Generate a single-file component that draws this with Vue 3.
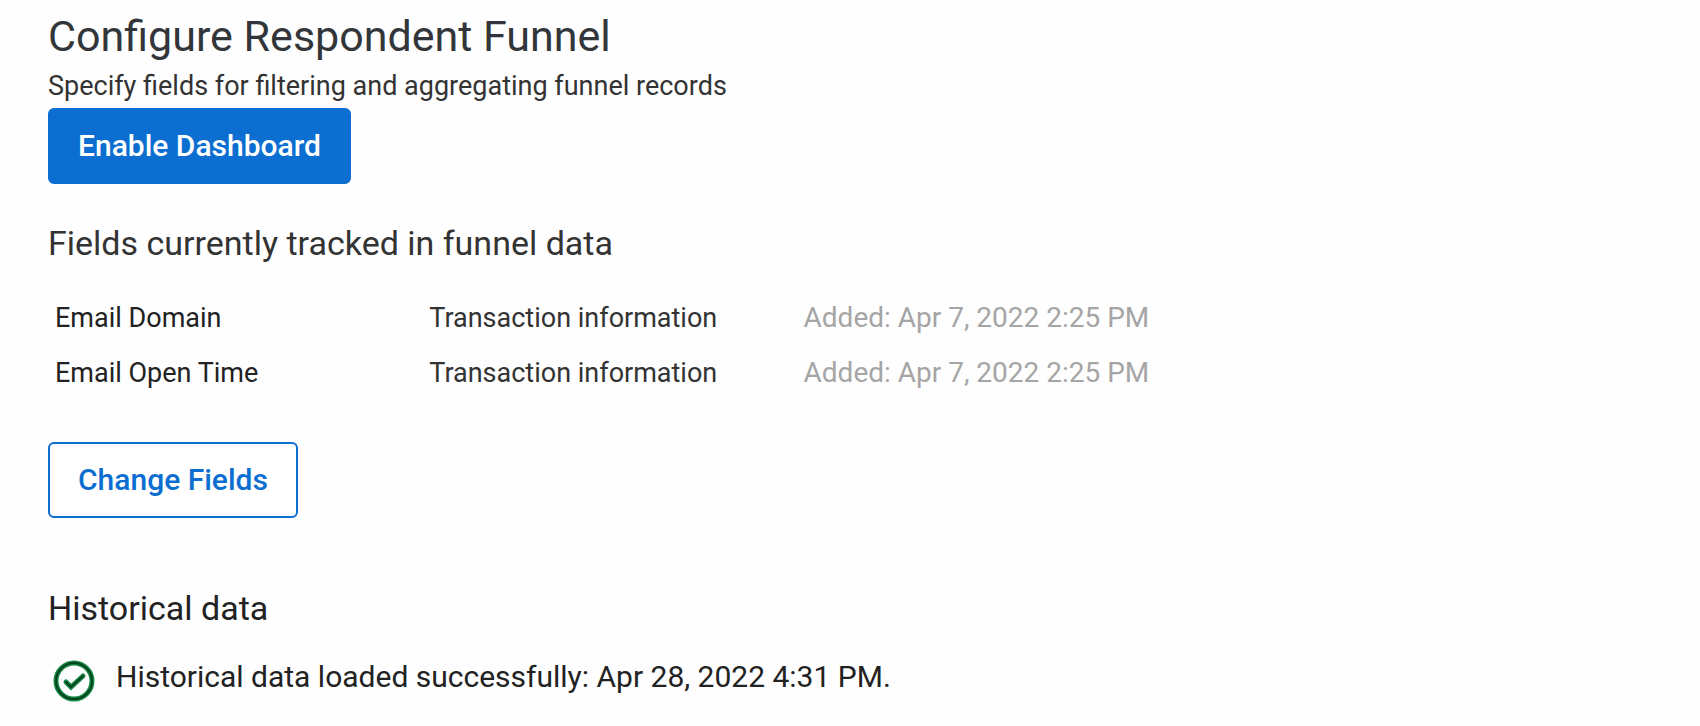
<script setup>
const fields = [
  { name: 'Email Domain', source: 'Transaction information', added: 'Added: Apr 7, 2022 2:25 PM' },
  { name: 'Email Open Time', source: 'Transaction information', added: 'Added: Apr 7, 2022 2:25 PM' },
]
</script>

<template>
  <main class="page">
    <header class="intro">
      <h1>Configure Respondent Funnel</h1>
      <p>Specify fields for filtering and aggregating funnel records</p>
      <button type="button" class="btn primary">Enable Dashboard</button>
    </header>

    <section class="tracked">
      <h2>Fields currently tracked in funnel data</h2>
      <table>
        <tbody>
          <tr v-for="field in fields" :key="field.name">
            <td class="name">{{ field.name }}</td>
            <td>{{ field.source }}</td>
            <td class="added">{{ field.added }}</td>
          </tr>
        </tbody>
      </table>
      <button type="button" class="btn outline">Change Fields</button>
    </section>

    <section class="history">
      <h2>Historical data</h2>
      <div class="status">
        <svg viewBox="0 0 42 42" fill="none" aria-hidden="true">
          <circle cx="21" cy="21" r="18" stroke="#148746" stroke-width="5" />
          <circle cx="21" cy="21" r="18" stroke="#03441c" stroke-width="2" />
          <path d="M13 22l5 5L30 16" stroke="#148746" stroke-width="5" stroke-linecap="round" />
          <path d="M13 22l5 5L30 16" stroke="#03441c" stroke-width="2" stroke-linecap="round" />
        </svg>
        <p>Historical data loaded successfully: Apr 28, 2022 4:31 PM.</p>
      </div>
    </section>
  </main>
</template>

<style>
body {
  margin: 0;
  background: #fefefe;
}
</style>

<style scoped>
.page {
  padding: 8px 48px 20px;
  color: #333;
  font-family: Roboto, "Liberation Sans", sans-serif;
}
h1,
h2,
p {
  margin: 0;
  font-weight: 400;
}
h1 {
  color: #32363a;
  font-size: 43px;
  line-height: 56px;
}
h2 {
  font-size: 34px;
  line-height: 40px;
}
.intro p {
  font-size: 27px;
  line-height: 44px;
}
.btn {
  display: block;
  box-sizing: border-box;
  height: 76px;
  padding: 0 28px;
  border: 2px solid #0b6ed0;
  border-radius: 6px;
  font: 500 30px/40px Roboto, "Liberation Sans", sans-serif;
  cursor: pointer;
}
.primary {
  background: #0b6ed0;
  color: #fff;
}
.outline {
  background: #fff;
  color: #0b6ed0;
}
.tracked {
  margin-top: 39px;
}
table {
  width: 70%;
  margin: 27px 0 42px;
  border-spacing: 0;
  table-layout: fixed;
}
td {
  height: 55px;
  padding: 0 7px;
  font-size: 27px;
  line-height: 36px;
  white-space: nowrap;
}
.name {
  color: #222;
}
.added {
  color: #a5a5a5;
  font-size: 28px;
}
.history {
  margin-top: 70px;
  color: #222;
}
.status {
  display: flex;
  align-items: flex-start;
  gap: 21px;
  margin-top: 32px;
  padding-left: 5px;
}
.status svg {
  flex: none;
  width: 42px;
  height: 42px;
}
.status p {
  font-size: 30px;
  line-height: 34px;
}
</style>
